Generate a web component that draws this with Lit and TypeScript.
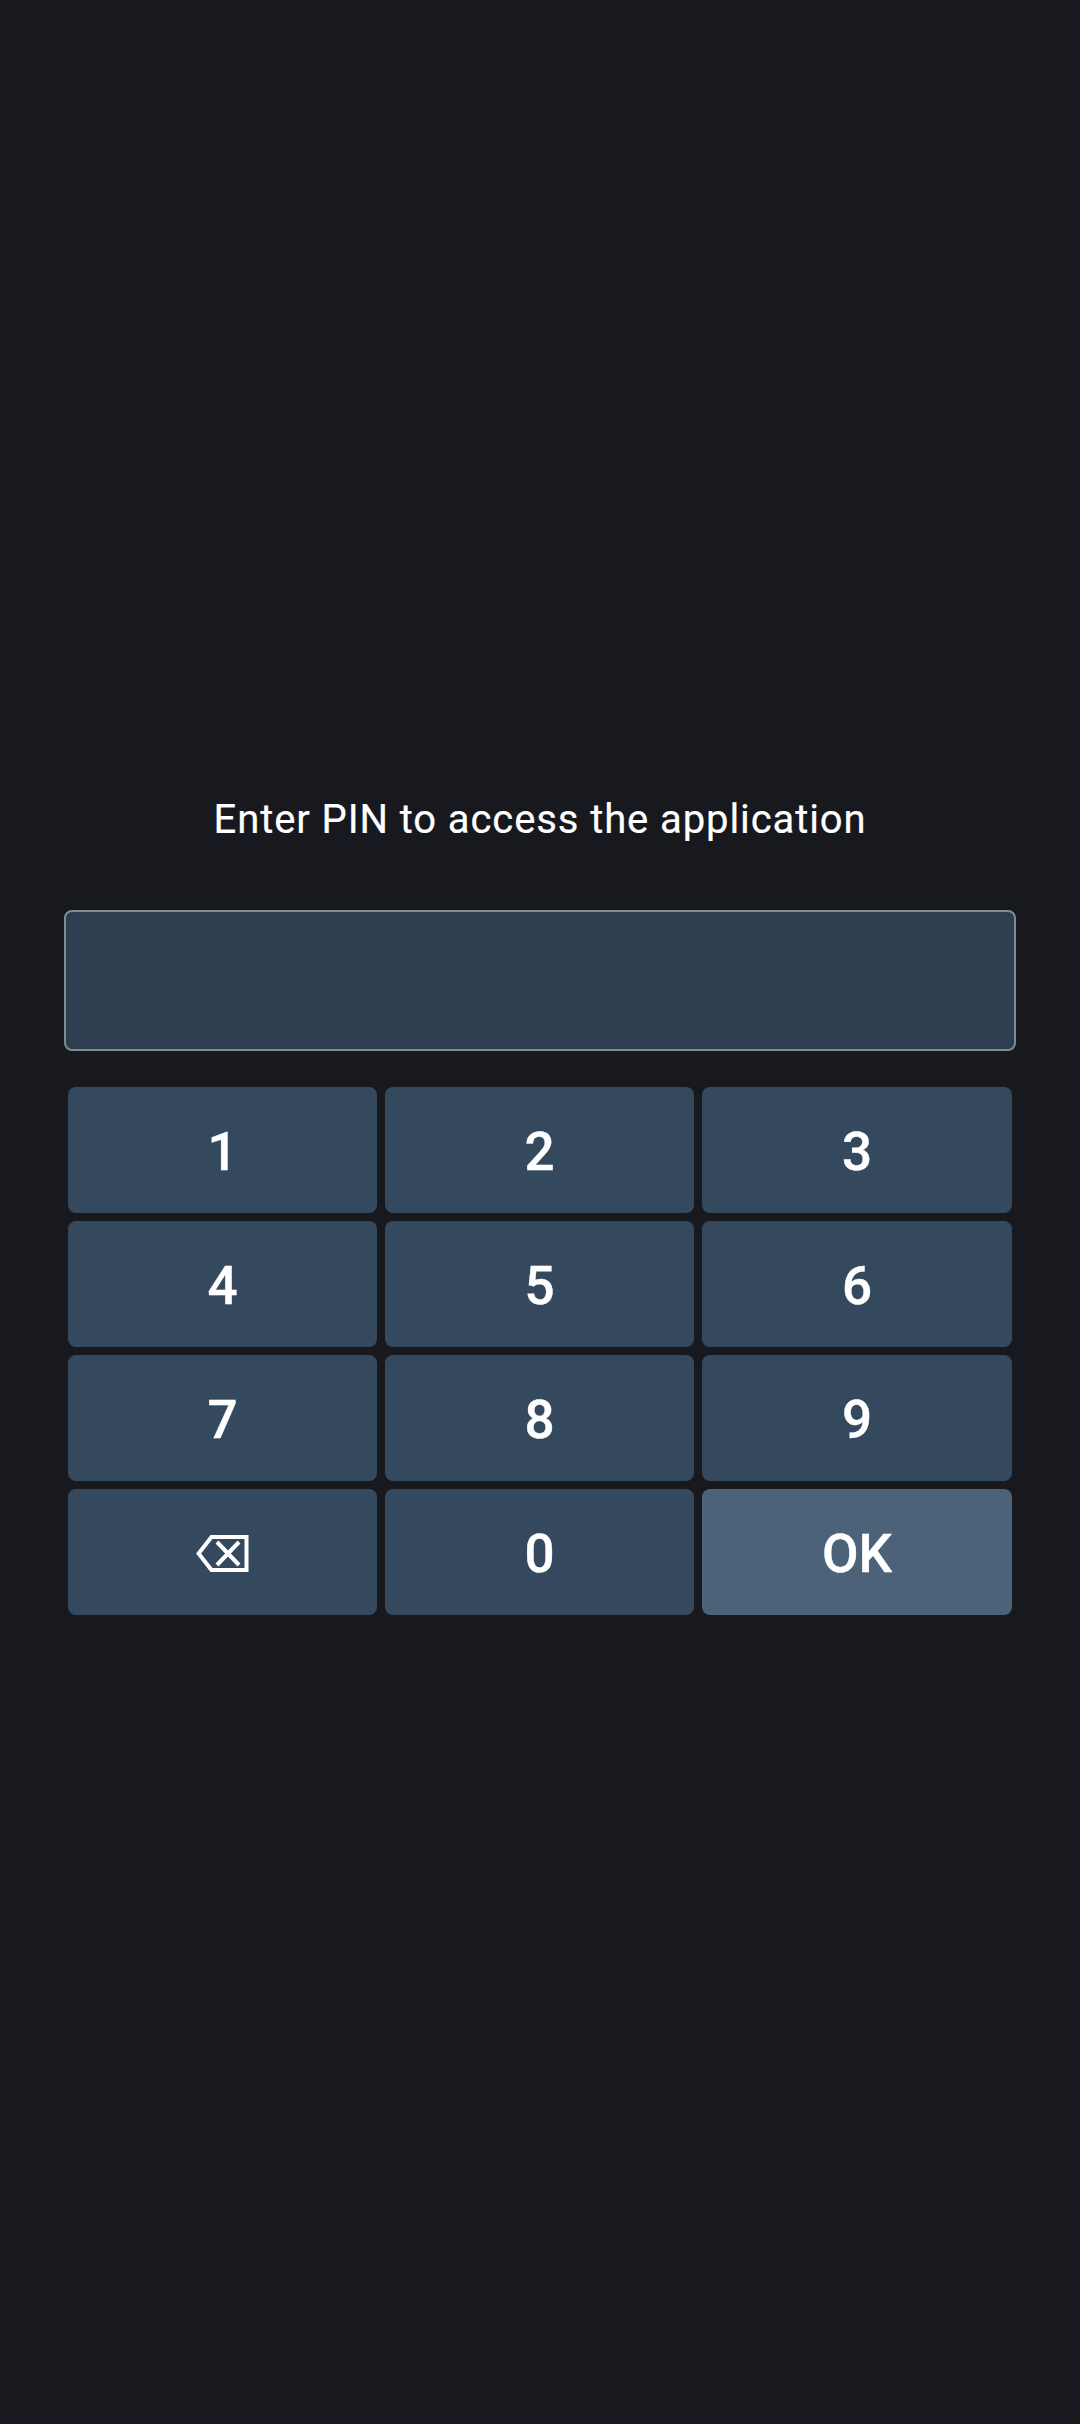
import { LitElement, html, css } from "lit";
import { customElement } from "lit/decorators.js";

@customElement("app-root")
export class AppRoot extends LitElement {
  static styles = css`
    :host {
      display: block;
      width: 1080px;
      height: 2424px;
      background: #17191e;
      font-family: Roboto, "Noto Sans", sans-serif;
      color: #fff;
      overflow: hidden;
    }
    .page {
      display: flex;
      flex-direction: column;
      padding: 790px 64px 0;
    }
    .title {
      margin: 0;
      height: 60px;
      line-height: 60px;
      text-align: center;
      font-size: 40px;
      font-weight: 400;
      letter-spacing: 0.9px;
      -webkit-text-stroke: 0.2px #fff;
    }
    .input {
      box-sizing: border-box;
      height: 141px;
      margin-top: 60px;
      background: #2d3e50;
      border: 2px solid #7f8c8d;
      border-radius: 8px;
    }
    .pad {
      display: grid;
      grid-template-columns: 309px 309px 310px;
      grid-auto-rows: 126px;
      gap: 8px;
      margin: 36px 4px 0;
    }
    .key {
      display: flex;
      align-items: center;
      justify-content: center;
      border: 0;
      padding: 3px 0 0;
      border-radius: 8px;
      background: #34495e;
      color: #fff;
      font-family: inherit;
      font-size: 53px;
      font-weight: 500;
      -webkit-text-stroke: 0.4px #fff;
    }
    .ok {
      background: #4c6278;
    }
    svg {
      display: block;
      width: 53px;
      height: 37px;
      fill: none;
      stroke: #fff;
      stroke-width: 4;
    }
  `;

  render() {
    const digits = ["1", "2", "3", "4", "5", "6", "7", "8", "9"];
    return html`
      <div class="page">
        <h1 class="title">Enter PIN to access the application</h1>
        <div class="input"></div>
        <div class="pad">
          ${digits.map((d) => html`<button class="key">${d}</button>`)}
          <button class="key" aria-label="Backspace">
            <svg viewBox="0 0 53 37">
              <path d="M50.5 2H15.5L2.6 18.5L15.5 35H50.5Z" />
              <path d="M21 7L43 30M43 7L21 30" />
            </svg>
          </button>
          <button class="key">0</button>
          <button class="key ok">OK</button>
        </div>
      </div>
    `;
  }
}
